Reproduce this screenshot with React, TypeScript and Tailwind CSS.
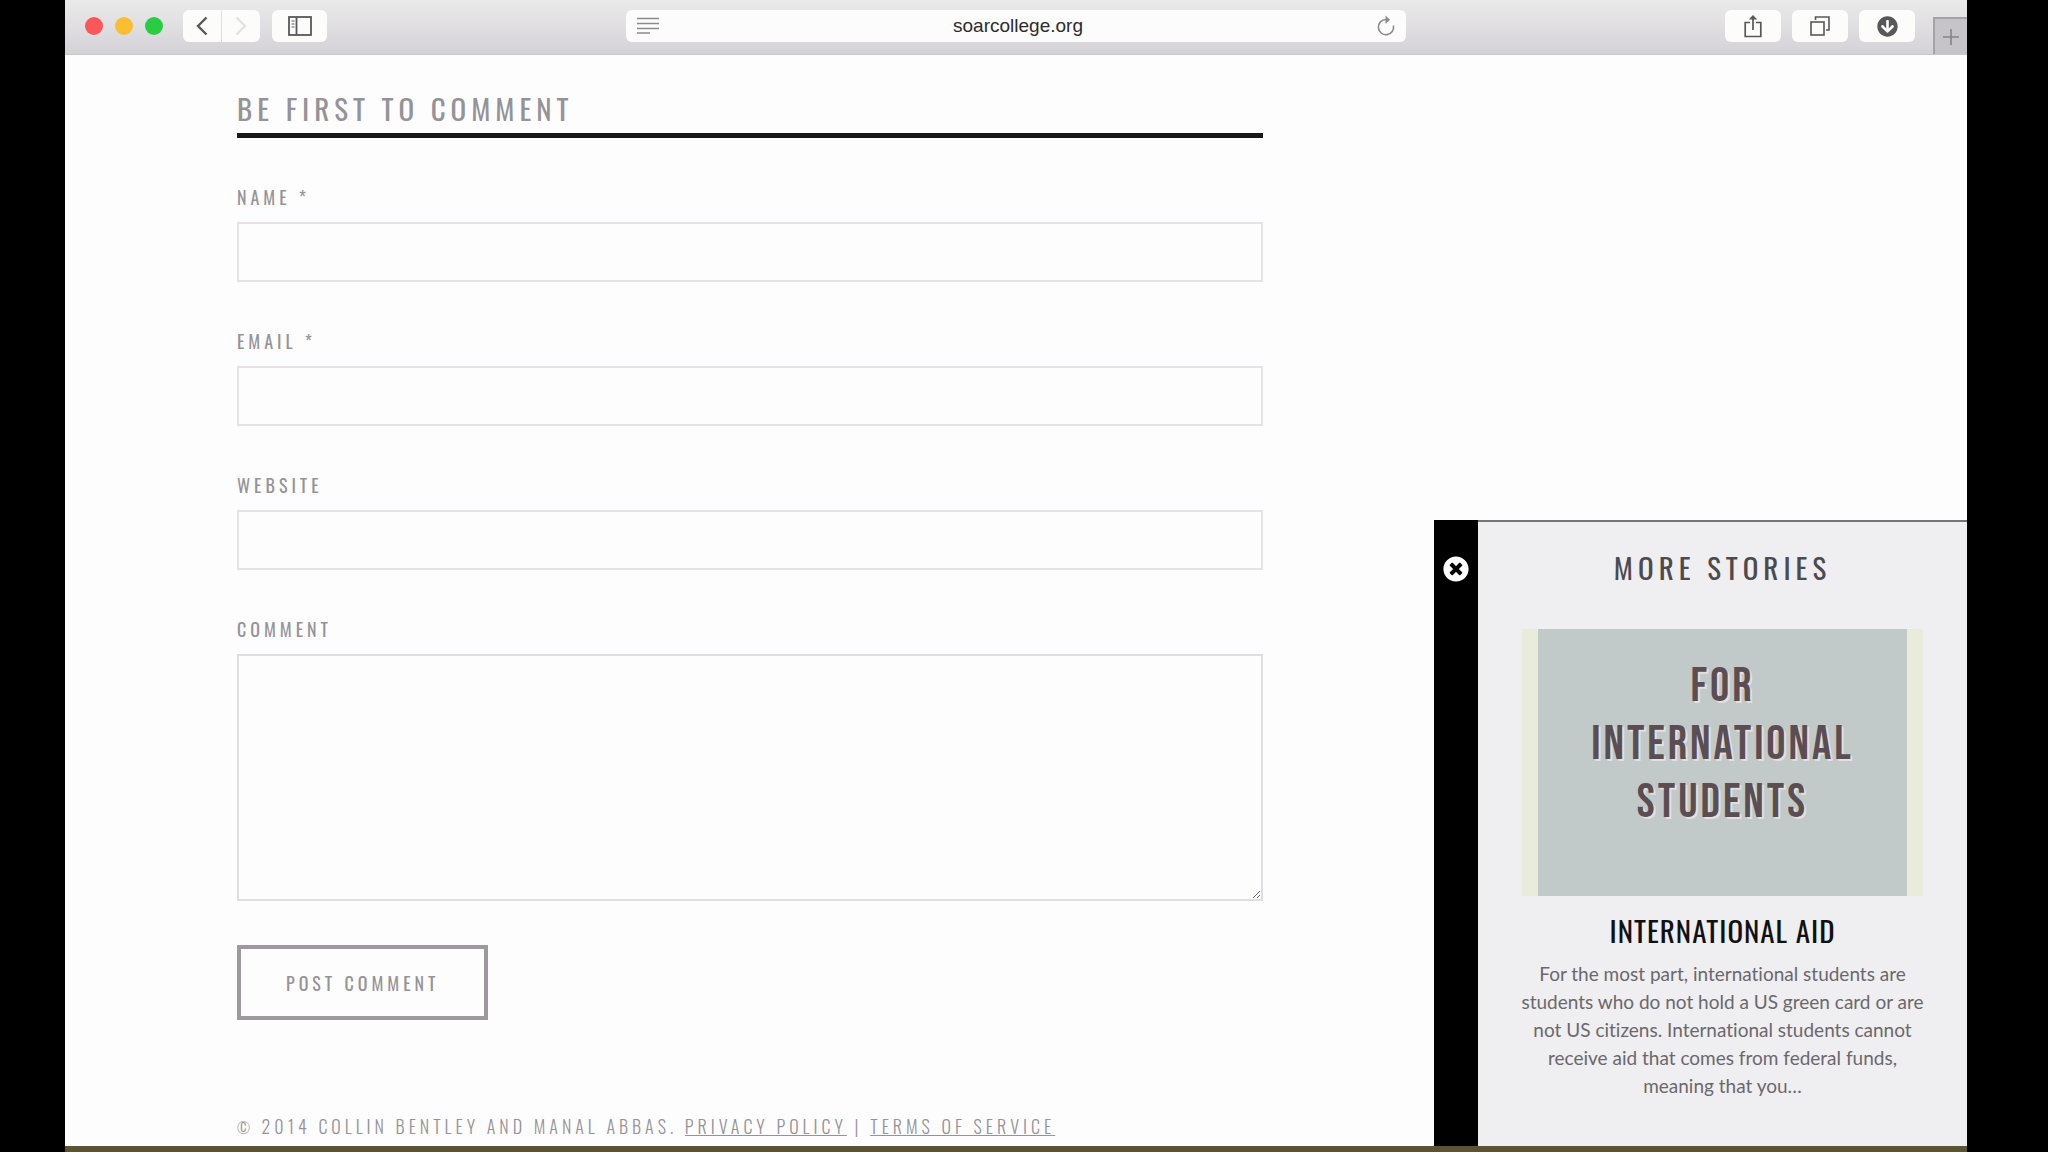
import { ReactNode } from 'react';
import { FaTimesCircle, FaArrowCircleDown } from 'react-icons/fa';

interface ToolbarButtonProps {
  label: string;
  className?: string;
  children: ReactNode;
}

const ToolbarButton = ({ label, className = 'w-14 rounded-md', children }: ToolbarButtonProps) => (
  <button
    type="button"
    aria-label={label}
    className={`flex h-8 items-center justify-center bg-[#fcfcfb] text-[#58585a] ${className}`}
  >
    {children}
  </button>
);

const Toolbar = () => (
  <header className="flex h-[55px] border-b border-[#c9c7cb] bg-linear-to-b from-[#ebeaea] to-[#d4d2d7]">
    <div className="flex flex-1 items-start pt-[10px]">
      {/* Window controls */}
      <div className="mr-5 ml-5 flex h-8 items-center gap-3">
        <span className="size-[18px] rounded-full bg-[#f9575a]" />
        <span className="size-[18px] rounded-full bg-[#fbbd32]" />
        <span className="size-[18px] rounded-full bg-[#28cd44]" />
      </div>
      <div className="mr-3 flex gap-px">
        <ToolbarButton label="Back" className="w-[38px] rounded-l-md">
          <svg width="12" height="20" viewBox="0 0 12 20" fill="none" stroke="currentColor" strokeWidth="2.4">
            <path d="M10.5 1.5 2 10l8.5 8.5" />
          </svg>
        </ToolbarButton>
        <ToolbarButton label="Forward" className="w-[38px] rounded-r-md">
          <svg width="12" height="20" viewBox="0 0 12 20" fill="none" stroke="#e2e2e2" strokeWidth="2.4">
            <path d="M1.5 1.5 10 10l-8.5 8.5" />
          </svg>
        </ToolbarButton>
      </div>
      <ToolbarButton label="Show sidebar" className="w-[55px] rounded-md">
        <svg width="24" height="20" viewBox="0 0 24 20" fill="none" stroke="currentColor" strokeWidth="1.8">
          <rect x="1" y="1" width="22" height="18" />
          <path d="M8.5 1v18" />
          <path d="M3.5 5h3M3.5 8h3M3.5 11h3" strokeWidth="1" />
        </svg>
      </ToolbarButton>
    </div>

    <div className="mt-[10px] flex h-8 w-[41%] items-center rounded-md bg-[#fdfcfd] px-[11px] text-[#8b8b8e]">
      <svg width="22" height="18" viewBox="0 0 22 18" fill="none" stroke="currentColor" strokeWidth="1.6">
        <path d="M0 1.5h22M0 6.5h22M0 11.5h22M0 16h13" />
      </svg>
      <input
        type="text"
        aria-label="Address"
        defaultValue="soarcollege.org"
        className="min-w-0 flex-1 bg-transparent text-center font-['Liberation_Sans',sans-serif] text-[19px] text-[#2b2b2d] outline-none"
      />
      <button type="button" aria-label="Reload">
        <svg width="18" height="22" viewBox="0 0 18 22" fill="none" stroke="currentColor" strokeWidth="1.6">
          <path d="M9 4.5A7.6 7.6 0 1 0 16.4 10.5" />
          <path d="M8.5.5 13 4.7 8.5 9z" fill="currentColor" stroke="none" />
        </svg>
      </button>
    </div>

    <div className="flex flex-1 justify-end">
      <div className="mt-[10px] mr-[18px] flex gap-[11px]">
        <ToolbarButton label="Share">
          <svg width="18" height="24" viewBox="0 0 18 24" fill="none" stroke="currentColor" strokeWidth="1.7">
            <path d="M6 8.5H1.2v14h15.6v-14H12" />
            <path d="M9 16V3" />
            <path d="M4.8 5.6 9 1l4.2 4.6z" fill="currentColor" stroke="none" />
          </svg>
        </ToolbarButton>
        <ToolbarButton label="Show tabs">
          <svg width="20" height="20" viewBox="0 0 20 20" fill="none" stroke="currentColor" strokeWidth="1.6">
            <rect x="1" y="6" width="13" height="13" />
            <path d="M5.5 4V1H19v13h-3" />
          </svg>
        </ToolbarButton>
        <ToolbarButton label="Downloads">
          <FaArrowCircleDown className="size-[21px]" />
        </ToolbarButton>
      </div>
      <button
        type="button"
        aria-label="New tab"
        className="mt-[17px] flex w-[34px] items-center justify-center border-t-2 border-l-2 border-[#a5a3a8] bg-[#c6c4c9] text-[#858388]"
      >
        <svg width="16" height="18" viewBox="0 0 16 18" fill="none" stroke="currentColor" strokeWidth="1.6">
          <path d="M8 1v16M0 9h16" />
        </svg>
      </button>
    </div>
  </header>
);

const fields = [
  { id: 'name', label: 'NAME *', type: 'text' },
  { id: 'email', label: 'EMAIL *', type: 'email' },
  { id: 'website', label: 'WEBSITE', type: 'url' },
];

const CommentForm = () => (
  <form>
    <h2 className="mb-[47px] border-b-[5px] border-[#19171a] pb-[7px] text-[29px] leading-9 tracking-[5px]">
      BE FIRST TO COMMENT
    </h2>
    <div className="flex flex-col gap-[47px]">
      {fields.map((field) => (
        <div key={field.id}>
          <label htmlFor={field.id} className="mb-[13px] block text-[18px] leading-6 tracking-[4px]">
            {field.label}
          </label>
          <input id={field.id} type={field.type} className="block h-[60px] w-full border-2 border-[#e6e3e8] px-4" />
        </div>
      ))}
      <div>
        <label htmlFor="comment" className="mb-[13px] block text-[18px] leading-6 tracking-[4px]">
          COMMENT
        </label>
        <textarea id="comment" className="block h-[247px] w-full resize border-2 border-[#e0dde2] p-4" />
      </div>
    </div>
    <button
      type="submit"
      className="mt-11 h-[75px] border-4 border-[#9d999e] px-[45px] text-[18px] leading-6 tracking-[4px]"
    >
      POST COMMENT
    </button>
  </form>
);

const MoreStories = () => (
  <aside className="absolute right-0 bottom-0 flex w-[533px] font-['Oswald',sans-serif]">
    <div className="w-11 bg-black pt-9 text-center">
      <button type="button" aria-label="Close" className="text-white">
        <FaTimesCircle className="size-[26px]" />
      </button>
    </div>
    <div className="flex-1 border-t-2 border-[#77757a] bg-[#efeef1] px-11 pt-[27px] pb-[46px] text-center">
      <h3 className="text-[29px] leading-9 tracking-[5px] text-[#4c4a4e]">MORE STORIES</h3>
      <div className="mt-11 bg-[#e9ecda] px-4">
        <div className="h-[267px] bg-[#c1cac8] pt-[29px] font-['Bebas_Neue','Oswald',sans-serif] text-[48px] leading-[58px] tracking-[3px] text-[#5b4e53] [text-shadow:2px_2px_0_#e6dfdf]">
          FOR
          <br />
          INTERNATIONAL
          <br />
          STUDENTS
        </div>
      </div>
      <h4 className="mt-4 text-[29px] leading-9 tracking-[1px] text-[#111]">INTERNATIONAL AID</h4>
      <p className="-mx-2 mt-3 font-['Lato',sans-serif] text-[19px] leading-7 text-[#6a686c] [font-variant-ligatures:none]">
        For the most part, international students are students who do not hold a US green card or are not US
        citizens. International students cannot receive aid that comes from federal funds, meaning that you…
      </p>
    </div>
  </aside>
);

const App = () => {
  return (
    <div className="flex min-h-screen flex-col bg-black pr-[81px] pl-[65px]">
      <div className="relative flex flex-1 flex-col bg-[#fefdfe]">
        <Toolbar />
        <main className="flex-1 pt-[35px] pl-[172px] font-['Oswald',sans-serif] text-[#959397]">
          <div className="max-w-[1026px]">
            <CommentForm />
            <footer className="mt-[94px] text-[18px] leading-6 font-light tracking-[4px]">
              <span className="text-[15px]">©</span> 2014 COLLIN BENTLEY AND MANAL ABBAS.{' '}
              <a href="#privacy" className="underline">
                PRIVACY POLICY
              </a>{' '}
              |{' '}
              <a href="#terms" className="underline">
                TERMS OF SERVICE
              </a>
            </footer>
          </div>
        </main>
        <MoreStories />
      </div>
      {/* Desktop strip under the window */}
      <div className="h-[6px] bg-[#5b5433]" />
    </div>
  );
};

export default App;
